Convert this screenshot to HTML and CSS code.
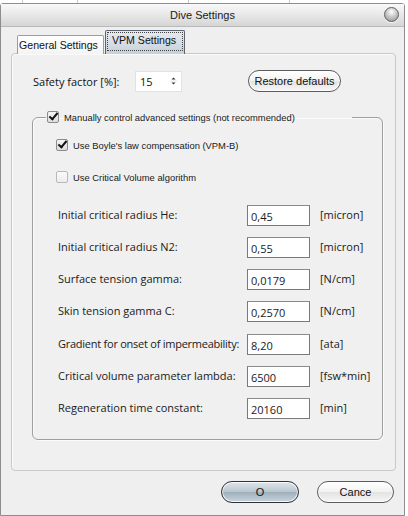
FILE: index.html
```html
<!DOCTYPE html>
<html lang="en">

<head>
  <meta charset="UTF-8">
  <title>Dive Settings</title>
  <link rel="stylesheet" href="styles.css">
</head>

<body>
  <div class="behind">
    <span class="cell c1"></span>
    <span class="cell c2"></span>
    <span class="cell c3"></span>
    <span class="cell c4"></span>
    <span class="cell c5"></span>
  </div>

  <div class="window">
    <div class="titlebar">
      <span class="title">Dive Settings</span>
      <span class="close"></span>
    </div>

    <div class="window-body">
      <div class="tabs">
        <div class="tab">General Settings</div>
        <div class="tab active"><span class="focus">VPM Settings</span></div>
      </div>

      <div class="panel">
        <div class="safety-row">
          <label class="safety-label">Safety factor [%]:</label>
          <div class="spin">
            <span class="spin-value">15</span>
            <span class="spin-arrows">
              <svg width="7" height="14" viewBox="0 0 7 14">
                <path d="M3.5 3.5 L5.5 5.5 L1.5 5.5 Z" fill="#333" />
                <line x1="0" y1="7" x2="7" y2="7" stroke="#e4e4e4" />
                <path d="M3.5 10.5 L5.5 8.5 L1.5 8.5 Z" fill="#333" />
              </svg>
            </span>
          </div>
          <button class="pill restore">Restore defaults</button>
        </div>

        <fieldset class="group">
          <legend class="group-legend">
            <span class="check checked"></span>
            <span>Manually control advanced settings (not recommended)</span>
          </legend>

          <div class="check-row first">
            <span class="check checked"></span>
            <span>Use Boyle's law compensation (VPM-B)</span>
          </div>
          <div class="check-row">
            <span class="check"></span>
            <span>Use Critical Volume algorithm</span>
          </div>

          <div class="fields">
            <span class="field-label">Initial critical radius He:</span>
            <span class="field-input">0,45</span>
            <span class="field-unit">[micron]</span>

            <span class="field-label">Initial critical radius N2:</span>
            <span class="field-input">0,55</span>
            <span class="field-unit">[micron]</span>

            <span class="field-label">Surface tension gamma:</span>
            <span class="field-input">0,0179</span>
            <span class="field-unit">[N/cm]</span>

            <span class="field-label">Skin tension gamma C:</span>
            <span class="field-input">0,2570</span>
            <span class="field-unit">[N/cm]</span>

            <span class="field-label tight">Gradient for onset of impermeability:</span>
            <span class="field-input">8,20</span>
            <span class="field-unit">[ata]</span>

            <span class="field-label">Critical volume parameter lambda:</span>
            <span class="field-input">6500</span>
            <span class="field-unit">[fsw*min]</span>

            <span class="field-label">Regeneration time constant:</span>
            <span class="field-input">20160</span>
            <span class="field-unit">[min]</span>
          </div>
        </fieldset>
      </div>

      <div class="buttons">
        <button class="pill ok">O</button>
        <button class="pill cancel">Cance</button>
      </div>
    </div>
  </div>
</body>

</html>
```

FILE: styles.css
```css
/* Reset */
html,
body {
  margin: 0;
  padding: 0;
}

body {
  width: 408px;
  height: 516px;
  overflow: hidden;
  background: #ffffff;
  font-family: 'Liberation Sans', Arial, sans-serif;
  font-size: 11px;
  color: #111;
}

/* Window behind the dialog */
.behind {
  display: flex;
  height: 3px;
  overflow: hidden;
  background: #fff;
}

.behind .cell {
  display: block;
  height: 3px;
  border-left: 1px solid #c8c8c8;
}

.behind .c1 { width: 22px; border-left: none; }
.behind .c2 { width: 54px; }
.behind .c3 { width: 110px; }
.behind .c4 { width: 100px; }
.behind .c5 { width: 110px; }

/* Dialog window */
.window {
  width: 403px;
  height: 511px;
  border: 1px solid #8d8d8d;
  border-radius: 3px 3px 0 0;
  background: #efefef;
}

.titlebar {
  display: flex;
  align-items: center;
  justify-content: center;
  position: relative;
  height: 22px;
  border-bottom: 1px solid #b9b9b9;
  background: linear-gradient(#f9f9f9, #e6e6e6 55%, #d5d5d5);
}

.title {
  font-size: 11px;
  color: #1a1a1a;
}

.close {
  position: absolute;
  right: 5px;
  top: 3px;
  width: 13px;
  height: 13px;
  border: 1px solid #5f5f5f;
  border-radius: 50%;
  background: radial-gradient(circle at 50% 30%, #ffffff, #c9c9c9 45%, #8e8e8e 100%);
  box-shadow: 0 1px 1px rgba(255, 255, 255, 0.8);
}

.window-body {
  padding: 0 8px 0 10px;
}

/* Tabs */
.tabs {
  display: flex;
  align-items: flex-end;
  height: 27px;
  padding-left: 6px;
  margin-bottom: -1px;
  position: relative;
  z-index: 1;
}

.tab {
  height: 18px;
  padding: 0 5px 0 1px;
  line-height: 19px;
  border: 1px solid #9c9c9c;
  border-bottom: none;
  border-radius: 2px 2px 0 0;
  background: linear-gradient(#ffffff, #f4f4f4);
  font-size: 10.6px;
  color: #111;
}

.tab.active {
  height: 22px;
  margin-left: 1px;
  padding: 1px 1px 0 1px;
  border-color: #5a6470;
  background: linear-gradient(#e6ebf1, #c7d0da);
}

.tab .focus {
  display: block;
  height: 17px;
  padding: 0 6px 0 4px;
  line-height: 15px;
  border: 1px dotted #444;
}

.panel {
  height: 400px;
  padding: 16px 12px 0 20px;
  border: 1px solid #c9c9c9;
  border-radius: 4px;
  box-shadow: inset 1px 1px 0 #fafafa;
  background: #f0f0f0;
}

/* Safety factor row */
.safety-row {
  display: flex;
  align-items: center;
  margin-left: 1px;
  height: 22px;
}

.safety-label {
  width: 102px;
  font-family: 'Open Sans', sans-serif;
  font-size: 11px;
}

.spin {
  display: flex;
  align-items: center;
  justify-content: space-between;
  width: 45px;
  height: 19px;
  border: 1px solid #e2e2e2;
  background: #fff;
}

.spin-value {
  padding-left: 4px;
  font-family: 'Open Sans', sans-serif;
  font-size: 11px;
}

.spin-arrows {
  display: flex;
  padding-right: 4px;
}

.pill {
  height: 22px;
  padding: 0;
  border: 1px solid #5c5c5c;
  border-radius: 11px;
  font-family: 'Liberation Sans', Arial, sans-serif;
  font-size: 11px;
  color: #111;
  background: linear-gradient(#ffffff, #f2f2f2 50%, #e3e3e3 51%, #f6f6f6);
  box-shadow: inset 0 0 0 1px rgba(255, 255, 255, 0.8);
}

.restore {
  width: 93px;
  margin-left: 66px;
}

/* Advanced group */
.group {
  margin: 19px 0 0 0;
  padding: 0 0 17px 23px;
  height: 310px;
  border: 1px solid #9e9e9e;
  border-radius: 6px;
  box-shadow: 1px 1px 0 #fbfbfb, inset 1px 1px 0 #fbfbfb;
}

.group-legend {
  display: flex;
  align-items: center;
  margin-left: -10px;
  padding: 0 57px 0 1px;
  font-size: 9.4px;
  color: #1a1a1a;
}

.check {
  display: inline-block;
  box-sizing: border-box;
  width: 12px;
  height: 12px;
  margin-right: 5px;
  border: 1px solid #8c8c8c;
  border-radius: 2px;
  background: linear-gradient(#f4f4f4, #dcdcdc);
  position: relative;
}

.check.checked::after {
  content: '';
  position: absolute;
  left: 3px;
  top: -1px;
  width: 3px;
  height: 7px;
  border-right: 2px solid #111;
  border-bottom: 2px solid #111;
  transform: rotate(40deg);
}

.check-row {
  display: flex;
  align-items: center;
  height: 12px;
  margin-top: 20px;
  font-size: 9.4px;
  color: #1a1a1a;
}

.check-row.first {
  margin-top: 16px;
}

.check-row .check:not(.checked) {
  border-color: #b9b9b9;
  background: linear-gradient(#fbfbfb, #ececec);
}

.fields {
  display: grid;
  grid-template-columns: 189px 63px auto;
  grid-auto-rows: 20px;
  row-gap: 12.3px;
  align-items: center;
  margin-top: 22px;
  margin-left: 2px;
  font-family: 'Open Sans', sans-serif;
  font-size: 11px;
  color: #1a1a1a;
}

.field-label {
  margin-top: -2px;
  white-space: nowrap;
}

.field-label.tight {
  letter-spacing: -0.25px;
}

.field-input {
  box-sizing: border-box;
  height: 21px;
  padding: 3px 0 0 3px;
  border: 1px solid #7a7a7a;
  border-top-color: #8a8a8a;
  background: #fff;
}

.field-unit {
  margin-top: -2px;
  padding-left: 10px;
}

/* Dialog buttons */
.buttons {
  display: flex;
  justify-content: flex-end;
  gap: 18px;
  margin-top: 10px;
  padding-right: 2px;
}

.ok {
  width: 78px;
  border-color: #2d3138;
  background: linear-gradient(#dfe6ec, #b9c6d0 48%, #9fb0bd 52%, #c9d4dc);
}

.cancel {
  width: 77px;
}
```
